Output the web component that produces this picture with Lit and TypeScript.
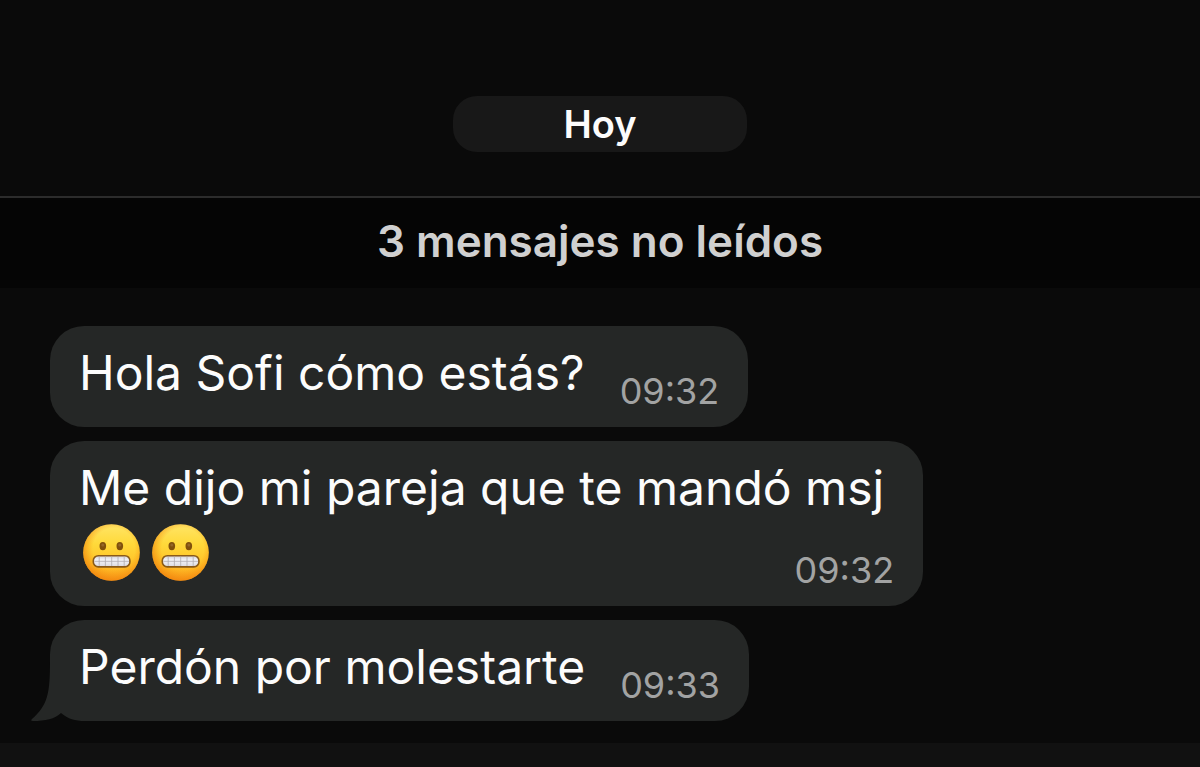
import { LitElement, html, css, svg } from "lit";
import { customElement, property } from "lit/decorators.js";

@customElement("grimace-emoji")
class GrimaceEmoji extends LitElement {
  static styles = css`
    :host { display: inline-block; width: 57px; height: 57px; }
    svg { display: block; width: 100%; height: 100%; }
  `;
  render() {
    return html`<svg viewBox="0 0 57 57" role="img" aria-label="😬">
      <defs>
        <linearGradient id="face" x1="0" y1="0" x2="0" y2="1">
          <stop offset="0" stop-color="#ffe566" />
          <stop offset=".35" stop-color="#ffd93a" />
          <stop offset=".7" stop-color="#ffc228" />
          <stop offset="1" stop-color="#fba01c" />
        </linearGradient>
        <radialGradient id="edge" cx=".54" cy=".44" r=".57">
          <stop offset=".65" stop-color="#f58a0c" stop-opacity="0" />
          <stop offset="1" stop-color="#ef7d0a" stop-opacity=".7" />
        </radialGradient>
        <linearGradient id="teeth" x1="0" y1="0" x2="0" y2="1">
          <stop offset="0" stop-color="#d4d3da" />
          <stop offset=".4" stop-color="#f4f4f8" />
          <stop offset="1" stop-color="#dad9e0" />
        </linearGradient>
      </defs>
      <circle cx="28.5" cy="28.5" r="28.3" fill="url(#face)" />
      <circle cx="28.5" cy="28.5" r="28.3" fill="url(#edge)" />
      <ellipse cx="19.8" cy="22.1" rx="3.3" ry="4.2" fill="#80500c" />
      <ellipse cx="36.8" cy="22.1" rx="3.3" ry="4.2" fill="#80500c" />
      <ellipse cx="19.8" cy="21" rx="1.5" ry="1.6" fill="#94662a" />
      <ellipse cx="36.8" cy="21" rx="1.5" ry="1.6" fill="#94662a" />
      <rect x="10.3" y="31.7" width="36.6" height="11.2" rx="5" fill="url(#teeth)" stroke="#8a5a18" stroke-width="1.6" />
      ${svg`<path d="M11.4 37.3H46M16.2 32.6V42M22.4 32.6V42M28.7 32.6V42M35 32.6V42M41.2 32.6V42" stroke="#aeabb0" stroke-width=".8" fill="none" />`}
    </svg>`;
  }
}

@customElement("chat-bubble")
class ChatBubble extends LitElement {
  @property() text = "";
  @property() time = "";
  @property({ type: Number }) emojis = 0;
  @property({ type: Boolean }) tail = false;

  static styles = css`
    :host { display: block; max-width: 100%; }
    .bubble {
      position: relative;
      isolation: isolate;
      display: flex;
      gap: 35px;
      box-sizing: border-box;
      padding: 15px 29px 14px;
      border-radius: 34px;
      background: #252726;
    }
    .text {
      margin: 0 0 8px;
      font-size: 48px;
      line-height: 64px;
      color: #fcfcfc;
    }
    .time {
      align-self: flex-end;
      font-size: 36px;
      line-height: 44px;
      color: #a2a3a3;
    }
    .stacked { display: grid; }
    .stacked .text, .stacked .time { grid-area: 1 / 1; }
    .stacked .text { padding-right: 10px; }
    .stacked .time { justify-self: end; }
    .emojis { display: flex; align-items: center; gap: 12px; height: 64px; padding-left: 4px; }
    .tail {
      position: absolute;
      z-index: -1;
      left: -19px;
      bottom: 0;
      width: 54px;
      height: 60px;
    }
  `;
  render() {
    return html`<article class="bubble ${this.emojis ? "stacked" : ""}">
      ${this.tail
        ? html`<svg class="tail" viewBox="0 0 54 60" aria-hidden="true">
            <path d="M19 20V60H54V20Z" fill="#0a0a0a" />
            <path d="M19 0C19 32 17 44 1 58Q-1 60 2 60C14 60 24 58 30 52C37 58 44 60 54 60V0Z" fill="#252726" />
          </svg>`
        : ""}
      <p class="text">
        ${this.text}
        ${this.emojis
          ? html`<span class="emojis">${Array.from({ length: this.emojis }, () => html`<grimace-emoji></grimace-emoji>`)}</span>`
          : ""}
      </p>
      <time class="time">${this.time}</time>
    </article>`;
  }
}

@customElement("app-root")
class AppRoot extends LitElement {
  static styles = css`
    :host {
      display: flex;
      flex-direction: column;
      min-height: 100vh;
      background: #0a0a0a;
      font-family: Inter, "Liberation Sans", sans-serif;
    }
    .day { display: flex; justify-content: center; padding: 96px 24px 44px; }
    .date {
      min-width: 294px;
      box-sizing: border-box;
      border-radius: 24px;
      background: #181818;
      color: #fcfcfc;
      font-size: 38px;
      font-weight: 600;
      line-height: 56px;
      text-align: center;
    }
    .unread {
      margin: 0;
      padding-bottom: 4px;
      border-top: 2px solid #2c2c2c;
      background: #050505;
      color: #d0d0d0;
      font-size: 44px;
      font-weight: 600;
      line-height: 86px;
      text-align: center;
    }
    .messages {
      display: flex;
      flex-direction: column;
      align-items: flex-start;
      gap: 14px;
      flex: 1;
      padding: 38px 50px 22px;
    }
    .bar { height: 24px; background: #111; }
  `;
  render() {
    return html`
      <header class="day"><time class="date">Hoy</time></header>
      <h2 class="unread">3 mensajes no leídos</h2>
      <main class="messages">
        <chat-bubble text="Hola Sofi cómo estás?" time="09:32"></chat-bubble>
        <chat-bubble text="Me dijo mi pareja que te mandó msj" time="09:32" emojis="2"></chat-bubble>
        <chat-bubble text="Perdón por molestarte" time="09:33" tail></chat-bubble>
      </main>
      <footer class="bar"></footer>
    `;
  }
}
